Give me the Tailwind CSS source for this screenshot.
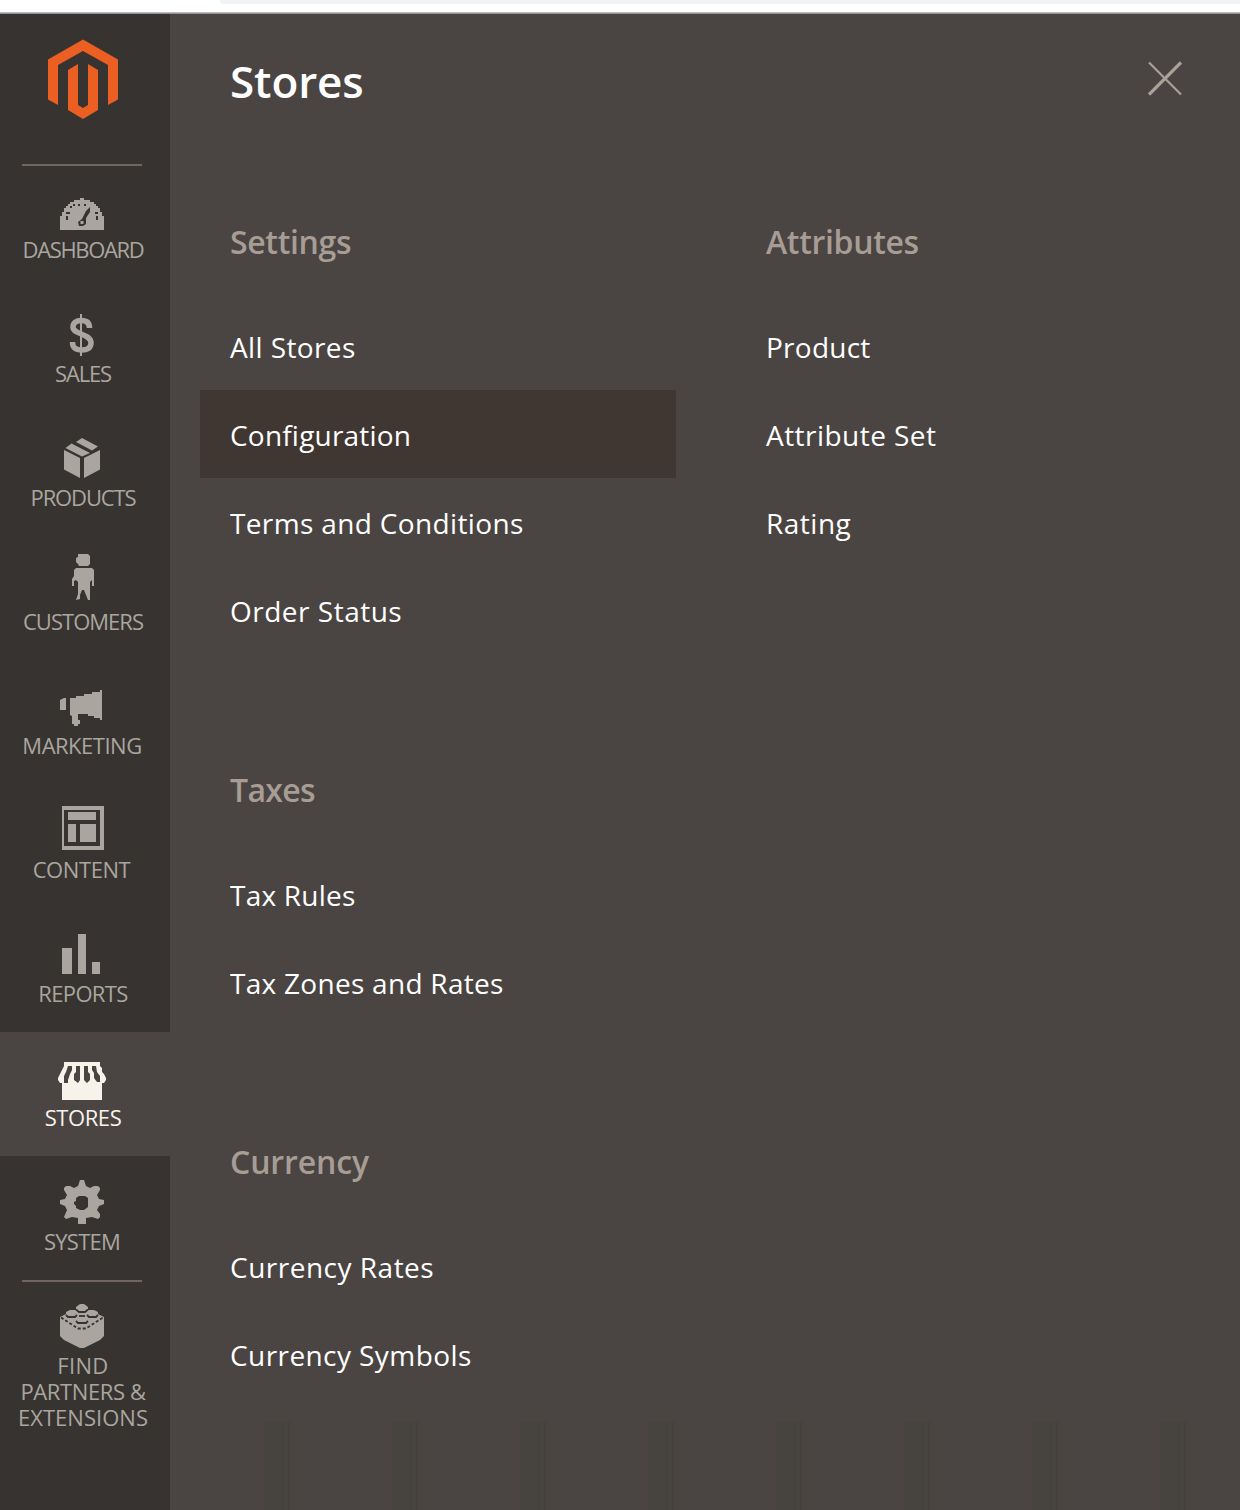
<!DOCTYPE html>
<html lang="en">
<head>
<meta charset="utf-8">
<title>Stores</title>
<script src="https://cdn.jsdelivr.net/npm/@tailwindcss/browser@4"></script>
</head>
<body class="h-[1510px] overflow-hidden bg-[#4a4542] text-white font-['Open_Sans',sans-serif] flex flex-col">

<!-- browser toolbar edge -->
<div class="h-3 shrink-0 bg-white pl-[220px]"><div class="h-1 rounded-bl-xl bg-[#f1f3f4]"></div></div>
<div class="h-0.5 shrink-0 border-t border-[#bcbbbb] bg-[#969493]"></div>

<div class="flex grow">
  <nav class="flex w-[170px] shrink-0 flex-col bg-[#373330] text-[22px] leading-[26px] text-[#aaa69f]">
    <a class="block h-[150px] pt-[24px] pl-[46px]">
      <svg class="block" width="74" height="84" viewBox="46 38 74 84" fill="#eb5f23">
        <path d="M83 39.500L118 59.500V99.500L108 105V65L83 51L58 65V105L48 99.500V59.500Z"/>
        <path d="M78 64V105L83 108L88 105V64L98 70V110L83 119L68 110V70Z"/>
      </svg>
    </a>
    <div class="mx-[22px] mr-[28px] h-0.5 bg-[#70655f]"></div>

    <a class="-mt-0.5 flex h-[124px] flex-col pt-4 pr-1">
      <svg class="mx-auto block shrink-0" width="50" height="54" viewBox="58 16 50 54" fill="currentColor">
        <path d="M60 66V52H62V48H64V44H66V42H68V40H70V38H74V36H80V34H84V36H90V38H94V40H96V42H98V44H100V48H102V52H104V66Z"/>
        <g fill="#373330"><path d="M66 48h4v2h-4zM66 52h2v4h-2zM70 42h2v2h-2zM73 40h2v2h-2zM78 40h2v2h-2zM84 40h2v2h-2zM95 48h3v2h-3zM96 52h2v4h-2z"/><path d="M90 43V48L86 54V60L83 62H79L78 58L82 55L86 47Z"/></g><path d="M80.500 57h3v3h-3z"/>
      </svg>
      <span class="mt-[2px] text-center tracking-[-1.350px]">DASHBOARD</span>
    </a>
    <a class="flex h-[124px] flex-col pt-4 pr-1">
      <svg class="mx-auto block shrink-0" width="50" height="54" viewBox="58 16 50 54" fill="currentColor">
        <path d="M80 26h2v42h-2z"/><path d="M89.500 40C89.500 34.500 86 32.500 81.500 32.500C76 32.500 73 35 73 39C73 47 91 45 91 55C91 60 87 62 82 62C76 62 72.500 60 72.500 54" fill="none" stroke="currentColor" stroke-width="5.500"/>
      </svg>
      <span class="mt-[2px] text-center tracking-[-1.170px]">SALES</span>
    </a>
    <a class="flex h-[124px] flex-col pt-4 pr-1">
      <svg class="mx-auto block shrink-0" width="50" height="54" viewBox="58 16 50 54" fill="currentColor">
        <path d="M64 38L80 46V66L64 57.500ZM100 38V57.500L84 66V46ZM82 26L98 34.500L92 38.500L76 30ZM71.500 31.500L90 41L82 44.500L65.500 36Z"/>
      </svg>
      <span class="mt-[2px] text-center tracking-[-1.130px]">PRODUCTS</span>
    </a>
    <a class="flex h-[124px] flex-col pt-4 pr-1">
      <svg class="mx-auto block shrink-0" width="50" height="54" viewBox="58 16 50 54" fill="currentColor">
        <path d="M78 18H88L90 20V28L88 30H79L78 28L76 26V22L78 21ZM76 32H92L94 34V50H92V44L90 46V64H88L86 59L84 54H82L80 59V63L76 64L78 58V46L76 44L74 45V50H72V43L74 40V34Z"/>
      </svg>
      <span class="mt-[2px] text-center tracking-[-0.970px]">CUSTOMERS</span>
    </a>
    <a class="flex h-[124px] flex-col pt-4 pr-1">
      <svg class="mx-auto block shrink-0" width="50" height="54" viewBox="58 16 50 54" fill="currentColor">
        <path d="M60 40L64 38H66V50H60ZM70 38H76V36H84V34H92V32H100V30H102V60H100V58H94V56H88V54H78V60H80V64H78V66H74V64H72V56L70 55Z"/>
      </svg>
      <span class="mt-[2px] pr-[2px] text-center tracking-[-0.500px]">MARKETING</span>
    </a>
    <a class="flex h-[124px] flex-col pt-4 pr-1">
      <svg class="mx-auto block shrink-0" width="50" height="54" viewBox="58 16 50 54" fill="currentColor">
        <path fill-rule="evenodd" d="M62 22H104V66H62ZM64 26V62H100V26Z"/><path d="M68 28h28v8H68zM68 40h8v18h-8zM80 40h16v18H80z"/>
      </svg>
      <span class="mt-[2px] pr-[3px] text-center tracking-[-0.410px]">CONTENT</span>
    </a>
    <a class="flex h-[124px] flex-col pt-4 pr-1">
      <svg class="mx-auto block shrink-0" width="50" height="54" viewBox="58 16 50 54" fill="currentColor">
        <path d="M62 40h10v26H62zM78 26h8v40h-8zM92 54h8v12h-8z"/>
      </svg>
      <span class="mt-[2px] text-center tracking-[-0.640px]">REPORTS</span>
    </a>
    <a class="flex h-[124px] flex-col bg-[#4a4542] pt-4 pr-1 text-[#f7f3eb]">
      <svg class="mx-auto block shrink-0" width="50" height="54" viewBox="58 16 50 54" fill="currentColor">
        <path d="M64 30H100V34L102 36V40L104 42L106 46V48L104 51H102V68H62V51H60L58 48V46L60 42L62 38L64 34Z"/>
        <path fill="#4a4542" d="M68 34H72V38L70 42L68 48V51H64V44L66 40ZM76 34H80V48L78 51L74 48V42L76 40ZM84 34H88V40L90 42V48L87 51L84 48ZM92 34H96L97 40L100 44V50H97L94 46V41L92 38Z"/>
      </svg>
      <span class="mt-[2px] text-center tracking-[-0.420px]">STORES</span>
    </a>
    <a class="flex h-[124px] flex-col pt-4 pr-1">
      <svg class="mx-auto block shrink-0" width="50" height="54" viewBox="58 16 50 54" fill="currentColor">
        <path fill-rule="evenodd" d="M80 24H84L86 30L90 32L94 30H98L100 32V34L97 39L99 43L104 44V48L99 50L97 54L100 58V61L98 63L92 61L86 62V68H78V62L72 61L66 63L64 61L67 54L65 50L60 48V44L65 43L67 39L64 34V32L66 30H70L74 32L78 30ZM79 40L76 42V45L74 46V48L76 50V52L80 54H84L88 51V42L85 40Z"/>
      </svg>
      <span class="mt-[2px] pr-[2px] text-center tracking-[-0.750px]">SYSTEM</span>
    </a>
    <div class="mx-[22px] mr-[28px] h-0.5 bg-[#70655f]"></div>
    <a class="-mt-0.5 flex flex-col pt-4 pr-1 text-center">
      <svg class="mx-auto block shrink-0" width="50" height="54" viewBox="58 16 50 54" fill="currentColor">
        <path d="M80 24H84L88 27V30L94 30L98 32V34L104 37V56L100 60L88 66L84 68H80L76 66L64 60L60 56V37L66 34V32L70 30H76V27Z"/>
        <g fill="none" stroke="#373330" stroke-width="1.800"><path d="M76 29.500L79 32H85L88 29.500M66 35L68 37H75L77 35M87 35L89 37H96L98 35M76 41L78 43H86L88 41"/><path d="M79 36H85"/><path stroke-dasharray="3 2" d="M61 37.500L78 48.500H86L103 37.500"/></g>
      </svg>
      <span class="mt-[2px] tracking-[0.310px]">FIND</span>
      <span class="tracking-[-0.380px]">PARTNERS &amp;</span>
      <span class="tracking-[0.030px]">EXTENSIONS</span>
    </a>
  </nav>

  <section class="flex grow flex-col px-[30px]">
    <header class="flex h-[206px] items-start justify-between pt-[37px] pr-[28px] pl-[30px]">
      <h1 class="text-[44px] leading-[60px] font-semibold tracking-[-0.100px]">Stores</h1>
      <svg class="mt-[10px] block" width="34" height="36" viewBox="0 0 34 36" fill="none" stroke="#aaa198"><path stroke-width="2.200" d="M1 1.500L33 33.500"/><path stroke-width="3.200" d="M33 1.500L1 33.500"/></svg>
    </header>

    <div class="flex h-[1202px] gap-[60px]">
      <div class="flex w-[476px] flex-col gap-[114px]">
        <div>
          <h2 class="mb-[38px] pl-[30px] text-[32px] leading-[44px] font-semibold tracking-[-0.330px] text-[#a79d95]">Settings</h2>
          <ul class="text-[28px] leading-[90px]">
            <li class="h-[88px] pl-[30px] tracking-[0.390px]">All Stores</li>
            <li class="h-[88px] bg-[#403733] pl-[30px] tracking-[0.200px]">Configuration</li>
            <li class="h-[88px] pl-[30px] tracking-[0.360px]">Terms and Conditions</li>
            <li class="h-[88px] pl-[30px] tracking-[0.500px]">Order Status</li>
          </ul>
        </div>
        <div>
          <h2 class="mb-[38px] pl-[30px] text-[32px] leading-[44px] font-semibold tracking-[-0.680px] text-[#a79d95]">Taxes</h2>
          <ul class="text-[28px] leading-[90px]">
            <li class="h-[88px] pl-[30px] tracking-[0.230px]">Tax Rules</li>
            <li class="h-[88px] pl-[30px] tracking-[0.280px]">Tax Zones and Rates</li>
          </ul>
        </div>
        <div>
          <h2 class="mb-[38px] pl-[30px] text-[32px] leading-[44px] font-semibold tracking-[-0.130px] text-[#a79d95]">Currency</h2>
          <ul class="text-[28px] leading-[90px]">
            <li class="h-[88px] pl-[30px] tracking-[0.500px]">Currency Rates</li>
            <li class="h-[88px] pl-[30px] tracking-[0.420px]">Currency Symbols</li>
          </ul>
        </div>
      </div>
      <div class="w-[444px]">
        <h2 class="mb-[38px] pl-[30px] text-[32px] leading-[44px] font-semibold tracking-[-0.330px] text-[#a79d95]">Attributes</h2>
        <ul class="text-[28px] leading-[90px]">
          <li class="h-[88px] pl-[30px] tracking-[0.250px]">Product</li>
          <li class="h-[88px] pl-[30px] tracking-[0.460px]">Attribute Set</li>
          <li class="h-[88px] pl-[30px] tracking-[0.500px]">Rating</li>
        </ul>
      </div>
    </div>

    <!-- faint repeating bands along the bottom of the panel -->
    <div class="-mr-[30px] grow bg-[repeating-linear-gradient(90deg,#4a4542_0px,#4a4542_64px,#47443e_64px,#47443e_81px,#43423c_81px,#43423c_84px,#47443e_84px,#47443e_88px,#43423b_88px,#43423b_90px,#4a4542_90px,#4a4542_128px)]"></div>
  </section>
</div>
</body>
</html>
